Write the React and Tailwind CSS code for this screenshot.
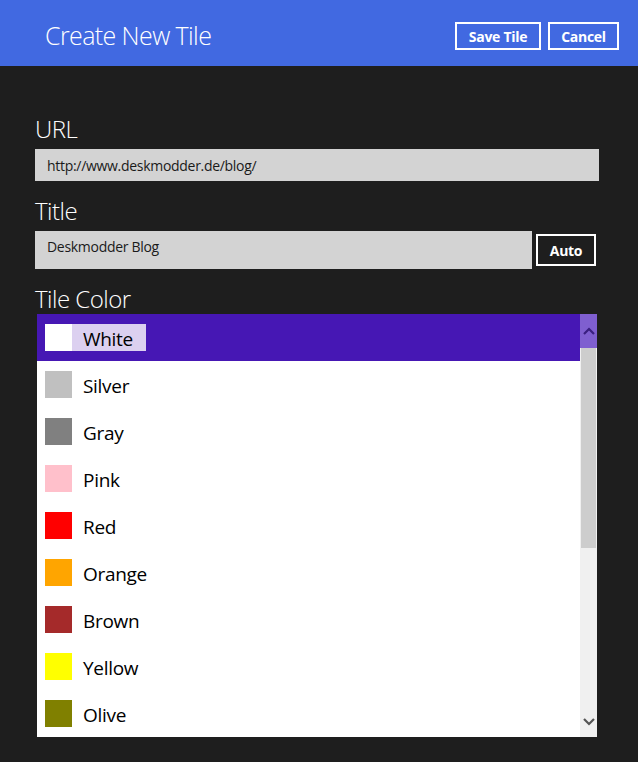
import React, { useState } from "react";

const COLORS = [
  { name: "White", hex: "#ffffff" },
  { name: "Silver", hex: "#c0c0c0" },
  { name: "Gray", hex: "#808080" },
  { name: "Pink", hex: "#ffc0cb" },
  { name: "Red", hex: "#ff0000" },
  { name: "Orange", hex: "#ffa500" },
  { name: "Brown", hex: "#a52a2a" },
  { name: "Yellow", hex: "#ffff00" },
  { name: "Olive", hex: "#808000" },
];

const font = { fontFamily: '"Open Sans", "Noto Sans", sans-serif' };

function OutlineButton({ children, className = "" }) {
  return (
    <button
      className={`border-2 border-white text-white font-bold text-[14px] leading-none tracking-[-0.3px] ${className}`}
    >
      {children}
    </button>
  );
}

export default function App() {
  const [selected, setSelected] = useState("White");

  return (
    <div className="w-[638px] h-[762px] bg-[#1e1e1e] overflow-hidden" style={font}>
      {/* header */}
      <div className="h-[66px] bg-[#4169e1] flex items-center pl-[45px] pr-[19px]">
        <h1 className="text-white font-light text-[25px] tracking-[-0.6px] flex-1 pt-[6px]">
          Create New Tile
        </h1>
        <div className="flex gap-[7px] pt-[6px]">
          <OutlineButton className="w-[86px] h-[28px] pt-[2px]">Save Tile</OutlineButton>
          <OutlineButton className="w-[71px] h-[28px] pt-[2px]">Cancel</OutlineButton>
        </div>
      </div>

      <div className="pl-[35px] pr-[39px] pt-[48px]">
        {/* URL */}
        <label className="block text-white font-light text-[24px] leading-[30px] tracking-[-0.5px] h-[35px]">
          URL
        </label>
        <div className="h-[32px] bg-[#d3d3d3] flex items-center pl-[12px] text-[14px] text-[#1a1a1a] tracking-[-0.3px]">
          http://www.deskmodder.de/blog/
        </div>

        {/* Title */}
        <label className="block text-white font-light text-[24px] leading-[30px] tracking-[-0.5px] h-[50px] pt-[15px]">
          Title
        </label>
        <div className="flex items-center gap-[4px]">
          <div className="h-[38px] w-[497px] bg-[#d3d3d3] pl-[12px] pt-[5px] text-[14px] text-[#1a1a1a] tracking-[-0.3px]">
            Deskmodder Blog
          </div>
          <OutlineButton className="w-[60px] h-[32px] pt-[2px]">Auto</OutlineButton>
        </div>

        {/* Tile color */}
        <label className="block text-white font-light text-[24px] leading-[30px] tracking-[-0.5px] h-[45px] pt-[15px]">
          Tile Color
        </label>
        <div className="ml-[2px] w-[560px] h-[423px] bg-white flex">
          <div className="flex-1 overflow-hidden">
            {COLORS.map((c) => {
              const active = c.name === selected;
              return (
                <div
                  key={c.name}
                  onClick={() => setSelected(c.name)}
                  className={`h-[47px] flex items-center pl-[8px] ${active ? "bg-[#4617b4]" : ""}`}
                >
                  <span className="w-[27px] h-[27px] shrink-0" style={{ backgroundColor: c.hex }} />
                  <span
                    className={`h-[27px] flex items-center pl-[11px] pr-[13px] pt-[4px] text-[19px] text-black tracking-[-0.3px] ${
                      active ? "bg-[#dcd0f0]" : ""
                    }`}
                  >
                    {c.name}
                  </span>
                </div>
              );
            })}
          </div>
          {/* scrollbar */}
          <div className="w-[17px] flex flex-col bg-[#f0f0f0]">
            <div className="h-[34px] bg-[#7f5fd0] flex items-center justify-center">
              <svg width="12" height="8" viewBox="0 0 12 8">
                <path d="M1 7 L6 2 L11 7" fill="none" stroke="#3a1f80" strokeWidth="2.2" />
              </svg>
            </div>
            <div className="h-[200px] bg-[#cdcdcd] mx-[1px]" />
            <div className="flex-1" />
            <div className="h-[30px] flex items-center justify-center">
              <svg width="12" height="8" viewBox="0 0 12 8">
                <path d="M1 1 L6 6 L11 1" fill="none" stroke="#555555" strokeWidth="2.2" />
              </svg>
            </div>
          </div>
        </div>
      </div>
    </div>
  );
}
